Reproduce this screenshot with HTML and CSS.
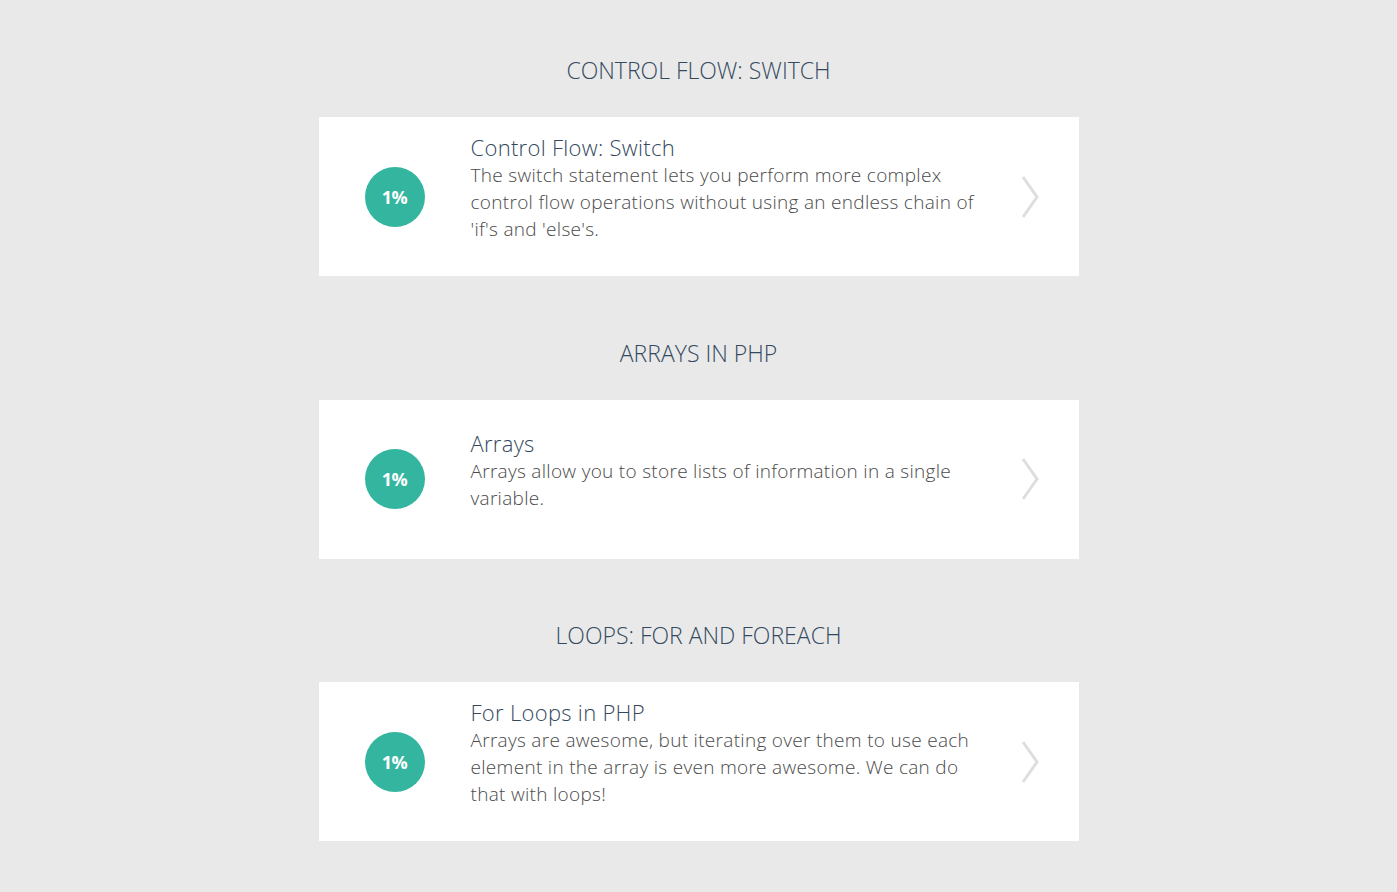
FILE: index.html
```html
<!DOCTYPE html>
<html>
<head>
<meta charset="utf-8">
<link rel="stylesheet" href="styles.css">
</head>
<body>
<main class="page">
  <section class="stage">
    <h2 class="stage-title">CONTROL FLOW: SWITCH</h2>
    <a class="card" href="#">
      <div class="progress">1%</div>
      <div class="info">
        <h3 class="info-title">Control Flow: Switch</h3>
        <p class="info-desc">The switch statement lets you perform more complex control flow operations without using an endless chain of 'if's and 'else's.</p>
      </div>
      <svg class="chev" width="18" height="42" viewBox="0 0 18 42"><polyline points="2,1 16,21 2,41" fill="none" stroke="#dedede" stroke-width="3"/></svg>
    </a>
  </section>
  <section class="stage">
    <h2 class="stage-title">ARRAYS IN PHP</h2>
    <a class="card" href="#">
      <div class="progress">1%</div>
      <div class="info">
        <h3 class="info-title">Arrays</h3>
        <p class="info-desc">Arrays allow you to store lists of information in a single variable.</p>
      </div>
      <svg class="chev" width="18" height="42" viewBox="0 0 18 42"><polyline points="2,1 16,21 2,41" fill="none" stroke="#dedede" stroke-width="3"/></svg>
    </a>
  </section>
  <section class="stage">
    <h2 class="stage-title">LOOPS: FOR AND FOREACH</h2>
    <a class="card" href="#">
      <div class="progress">1%</div>
      <div class="info">
        <h3 class="info-title">For Loops in PHP</h3>
        <p class="info-desc">Arrays are awesome, but iterating over them to use each element in the array is even more awesome. We can do that with loops!</p>
      </div>
      <svg class="chev" width="18" height="42" viewBox="0 0 18 42"><polyline points="2,1 16,21 2,41" fill="none" stroke="#dedede" stroke-width="3"/></svg>
    </a>
  </section>
</main>
</body>
</html>
```
FILE: styles.css
```css
* { box-sizing: border-box; }
html, body { margin: 0; padding: 0; }
body {
  background: #e9e9e9;
  font-family: "Open Sans", "Liberation Sans", sans-serif;
  font-weight: 300;
}
.page {
  width: 760px;
  margin: 0 auto;
  padding-top: 55px;
  display: flex;
  flex-direction: column;
  gap: 61.5px;
}
.stage { display: flex; flex-direction: column; }
.stage-title {
  margin: 0 0 32px;
  height: 30px;
  line-height: 30px;
  text-align: center;
  font-size: 23px;
  font-weight: 300;
  color: #34495e;
}
.card {
  display: flex;
  align-items: center;
  height: 159px;
  background: #fff;
  padding: 0 40px 0 46px;
  text-decoration: none;
}
.progress {
  flex: none;
  width: 60px;
  height: 60px;
  border-radius: 50%;
  background: #34b5a0;
  color: #fff;
  font-weight: 700;
  font-size: 18px;
  display: flex;
  align-items: center;
  justify-content: center;
  letter-spacing: -0.5px;
}
.info {
  width: 520px;
  margin-left: 46px;
  margin-bottom: 18px;
}
.info-title {
  margin: 0;
  font-size: 22px;
  line-height: 30px;
  font-weight: 300;
  color: #34495e;
  letter-spacing: 0.3px;
}
.info-desc {
  margin: 0;
  font-size: 19px;
  line-height: 27px;
  color: #4a4a4a;
  letter-spacing: 0.3px;
}
.chev { margin-left: auto; flex: none; }
```
